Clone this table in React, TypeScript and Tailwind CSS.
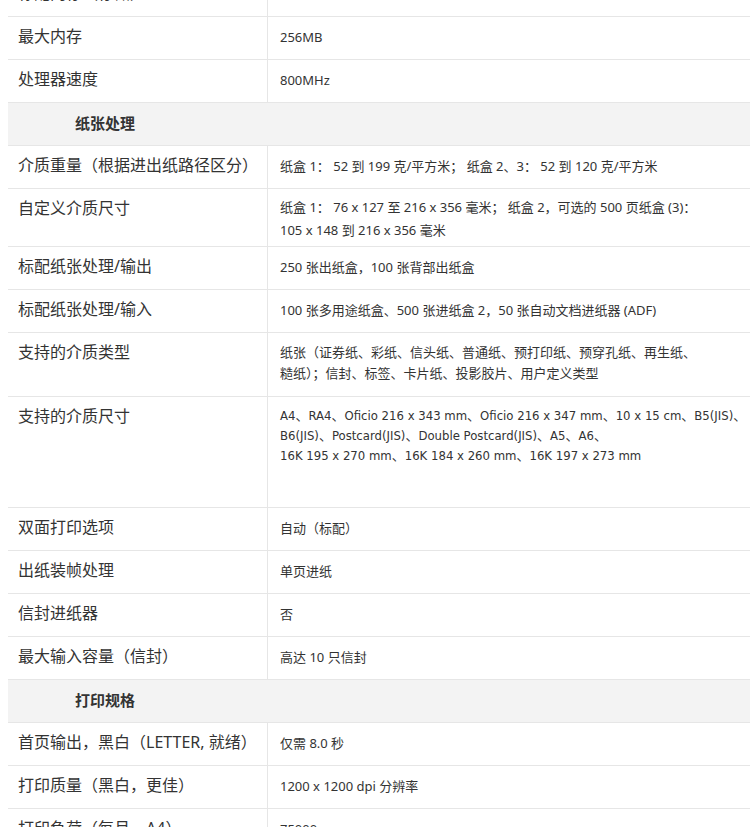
import React from "react";

type SpecRow = {
  label?: string;
  value?: React.ReactNode;
  section?: string;
  h?: string;
  lh?: string;
  pt?: string;
  narrow?: boolean;
};

const rows: SpecRow[] = [
  { label: "标配内存（存储）", value: "256MB" },
  { label: "最大内存", value: "256MB" },
  { label: "处理器速度", value: "800MHz" },
  { section: "纸张处理" },
  {
    label: "介质重量（根据进出纸路径区分）",
    value: "纸盒 1： 52 到 199 克/平方米； 纸盒 2、3： 52 到 120 克/平方米",
  },
  {
    label: "自定义介质尺寸",
    value: (
      <>
        纸盒 1： 76 x 127 至 216 x 356 毫米； 纸盒 2，可选的 500 页纸盒 (3)：
        <br />
        105 x 148 到 216 x 356 毫米
      </>
    ),
    h: "h-[58px]",
    lh: "leading-[23px]",
    pt: "pt-[7px]",
  },
  { label: "标配纸张处理/输出", value: "250 张出纸盒，100 张背部出纸盒" },
  {
    label: "标配纸张处理/输入",
    value: "100 张多用途纸盒、500 张进纸盒 2，50 张自动文档进纸器 (ADF)",
  },
  {
    label: "支持的介质类型",
    value: (
      <>
        纸张（证券纸、彩纸、信头纸、普通纸、预打印纸、预穿孔纸、再生纸、
        <br />
        糙纸）；信封、标签、卡片纸、投影胶片、用户定义类型
      </>
    ),
    h: "h-[64px]",
    lh: "leading-[21px]",
    pt: "pt-[9px]",
  },
  {
    label: "支持的介质尺寸",
    value: (
      <>
        A4、RA4、Oficio 216 x 343 mm、Oficio 216 x 347 mm、10 x 15 cm、B5(JIS)、
        <br />
        B6(JIS)、Postcard(JIS)、Double Postcard(JIS)、A5、A6、
        <br />
        16K 195 x 270 mm、16K 184 x 260 mm、16K 197 x 273 mm
      </>
    ),
    h: "h-[111px]",
    lh: "leading-[20px]",
    pt: "pt-[9px]",
    narrow: true,
  },
  { label: "双面打印选项", value: "自动（标配）" },
  { label: "出纸装帧处理", value: "单页进纸" },
  { label: "信封进纸器", value: "否" },
  { label: "最大输入容量（信封）", value: "高达 10 只信封" },
  { section: "打印规格" },
  { label: "首页输出，黑白（LETTER, 就绪）", value: "仅需 8.0 秒" },
  { label: "打印质量（黑白，更佳）", value: "1200 x 1200 dpi 分辨率" },
  { label: "打印负荷（每月，A4）", value: "75000" },
];

export default function App() {
  return (
    <div
      className="w-[750px] bg-white overflow-hidden text-[#333]"
      style={{ fontFamily: '"Noto Sans", "Noto Sans CJK SC", sans-serif' }}
    >
      <div className="-mt-[26px] ml-[8px]">
        {rows.map((r, i) =>
          r.section ? (
            <div
              key={i}
              className="h-[43px] flex items-center bg-[#f3f3f3] border-b border-[#e6e6e6] pl-[67px] pb-[2px] text-[15px] font-bold"
            >
              {r.section}
            </div>
          ) : (
            <div
              key={i}
              className={`flex border-b border-[#e6e6e6] ${r.h ?? "h-[43px]"}`}
            >
              <div className="w-[260px] shrink-0 border-r border-[#e6e6e6] pl-[10px] pt-[8px] text-[16px] leading-[23px]">
                {r.label}
              </div>
              <div
                className={`flex-1 pl-[12px] text-[13px] whitespace-nowrap ${r.lh ?? "leading-[22px]"} ${r.pt ?? "pt-[9px]"}`}
                style={
                  r.narrow
                    ? {
                        fontFamily:
                          '"Liberation Sans Narrow", "DejaVu Sans Condensed", "Noto Sans CJK SC", sans-serif',
                      }
                    : undefined
                }
              >
                {r.value}
              </div>
            </div>
          )
        )}
      </div>
    </div>
  );
}
